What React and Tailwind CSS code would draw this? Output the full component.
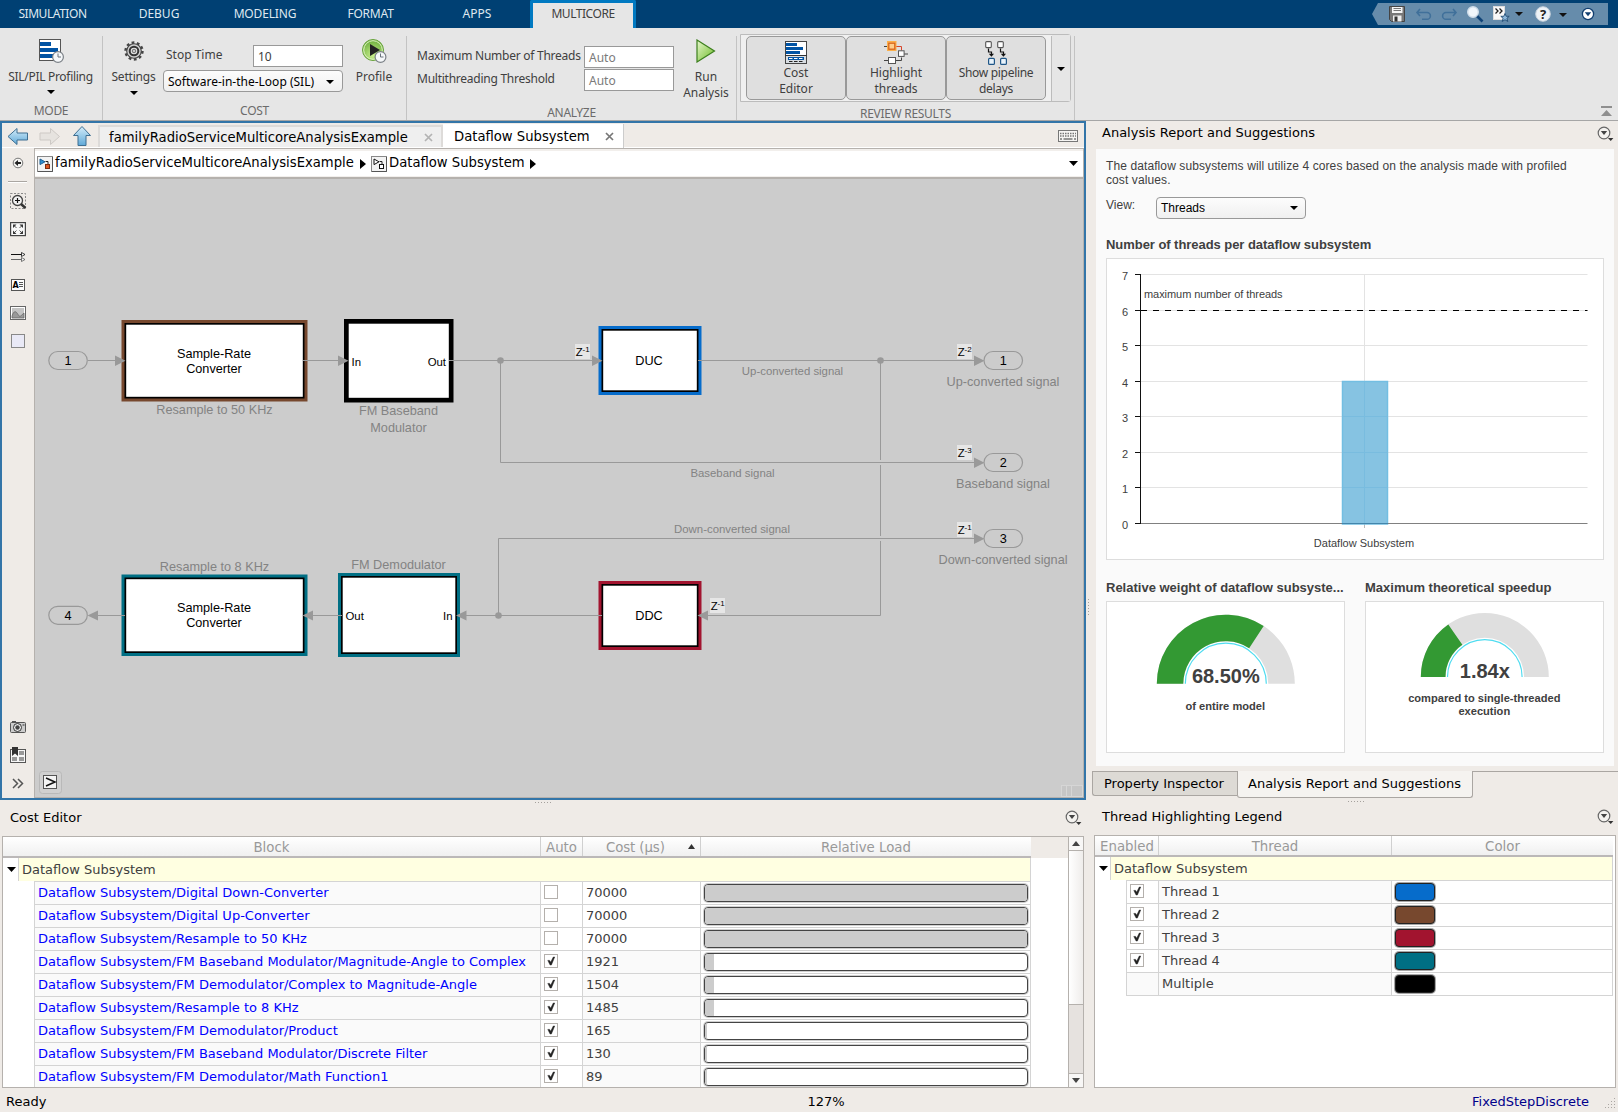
import clsx from "clsx";

const costRows = [
  { block: "Dataflow Subsystem/Digital Down-Converter", auto: false, cost: "70000", load: 324 },
  { block: "Dataflow Subsystem/Digital Up-Converter", auto: false, cost: "70000", load: 324 },
  { block: "Dataflow Subsystem/Resample to 50 KHz", auto: false, cost: "70000", load: 324 },
  { block: "Dataflow Subsystem/FM Baseband Modulator/Magnitude-Angle to Complex", auto: true, cost: "1921", load: 9 },
  { block: "Dataflow Subsystem/FM Demodulator/Complex to Magnitude-Angle", auto: true, cost: "1504", load: 9 },
  { block: "Dataflow Subsystem/Resample to 8 KHz", auto: true, cost: "1485", load: 9 },
  { block: "Dataflow Subsystem/FM Demodulator/Product", auto: true, cost: "165", load: 2 },
  { block: "Dataflow Subsystem/FM Baseband Modulator/Discrete Filter", auto: true, cost: "130", load: 2 },
  { block: "Dataflow Subsystem/FM Demodulator/Math Function1", auto: true, cost: "89", load: 2 },
];

const threads = [
  { name: "Thread 1", swatch: "bg-[#066ccb]", enabled: true },
  { name: "Thread 2", swatch: "bg-[#77482e]", enabled: true },
  { name: "Thread 3", swatch: "bg-[#a2142f]", enabled: true },
  { name: "Thread 4", swatch: "bg-[#006f84]", enabled: true },
  { name: "Multiple", swatch: "bg-black", enabled: false },
];

/* ---------- small shared pieces ---------- */

const Caret = ({ className, up }) => (
  <svg className={clsx("shrink-0", className)} width="9" height="5" viewBox="0 0 9 5" preserveAspectRatio="none">
    <path d={up ? "M0 5L4.5 0L9 5z" : "M0 0h9L4.5 5z"} fill="currentColor" />
  </svg>
);

const Check = ({ on }) => (
  <div className="flex size-[14px] items-center justify-center border border-[#b4b0ac] bg-white">
    {on && (
      <svg width="10" height="10" viewBox="0 0 10 10">
        <path d="M1.8 4.4h1.800L4.700 6.200L7.300 1h1.400L5.400 9H4.100z" fill="#222" stroke="#222" strokeWidth="0.5" />
      </svg>
    )}
  </div>
);

const PanelMenu = () => (
  <svg width="18" height="16" viewBox="0 0 18 16">
    <circle cx="7" cy="7" r="5.8" fill="#f4f2ef" stroke="#666" strokeWidth="1.2" />
    <path d="M3.8 5h6.4L7 9z" fill="#444" />
    <path d="M11 12h5.4l-2.7 3z" fill="#333" />
  </svg>
);

const Dots = ({ vertical }) => (
  <div className={clsx("flex gap-[2px]", vertical && "flex-col")}>
    {[0, 1, 2, 3, 4, 5].map((i) => (
      <span key={i} className="size-px bg-[#a5a19d]" />
    ))}
  </div>
);

const DropList = ({ children, className }) => (
  <div
    className={clsx(
      "flex h-[22px] items-center justify-between rounded-[4px] border border-[#999] bg-linear-to-b from-[#fcfcfc] to-[#f0f0f0] pl-[4px] text-black",
      className
    )}
  >
    {children}
    <Caret className="h-[4px] w-[8px]" />
  </div>
);

/* ---------- toolstrip icons ---------- */

const Clock = ({ x, y }) => (
  <g>
    <circle cx={x} cy={y} r="5.4" fill="#f6f8fa" stroke="#7b8187" strokeWidth="1.2" />
    <path d={`M${x} ${y - 3.5}V${y}h3`} fill="none" stroke="#68727c" />
  </g>
);

const ProfilingIcon = () => (
  <svg width="26" height="24" viewBox="0 0 26 24">
    <rect x="0.5" y="0.5" width="21" height="21" fill="#fff" stroke="#555" />
    <path d="M1 3h11v4H1zM1 9h18v4H1zM1 15h14v4H1z" fill="#0053a4" />
    <Clock x={19} y={18} />
  </svg>
);

const GearIcon = () => (
  <svg width="20" height="20" viewBox="0 0 20 20">
    <circle cx="10" cy="10" r="8.4" fill="none" stroke="#444" strokeWidth="2.6" strokeDasharray="2.7 2.58" />
    <circle cx="10" cy="10" r="7.3" fill="#cfcfcf" stroke="#444" strokeWidth="1.1" />
    <circle cx="10" cy="10" r="4.3" fill="#e8e8e8" stroke="#333" strokeWidth="2" />
    <circle cx="10" cy="10" r="1.8" fill="#c9c9c9" stroke="#555" strokeWidth="0.8" />
  </svg>
);

const ProfileIcon = () => (
  <svg width="26" height="24" viewBox="0 0 26 24">
    <defs>
      <radialGradient id="profileGreen" cx="0.5" cy="0.75" r="0.7">
        <stop offset="0" stopColor="#c9ee8e" />
        <stop offset="1" stopColor="#6fb13f" />
      </radialGradient>
    </defs>
    <circle cx="11" cy="11" r="10.5" fill="url(#profileGreen)" stroke="#69a33e" />
    <circle cx="11" cy="11" r="9.3" fill="none" stroke="#dff3c4" strokeWidth="1" />
    <path d="M8 5v12l10-6z" fill="#222" />
    <Clock x={18.5} y={18} />
  </svg>
);

const RunIcon = () => (
  <svg width="20" height="24" viewBox="0 0 20 24">
    <defs>
      <linearGradient id="runGreen" x1="0" y1="0" x2="1" y2="1">
        <stop offset="0" stopColor="#e8f7cf" />
        <stop offset="1" stopColor="#6cbb24" />
      </linearGradient>
    </defs>
    <path d="M1 1l17.5 11L1 23z" fill="url(#runGreen)" stroke="#3c7f1d" strokeWidth="1.2" />
  </svg>
);

const CostEditorIcon = () => (
  <svg width="22" height="23" viewBox="0 0 22 23">
    <rect x="0.5" y="0.5" width="21" height="22" fill="#fff" stroke="#444" />
    <path d="M1 2h11v3H1zM1 6h17v3H1zM1 10h14v3H1z" fill="#0053a4" />
    <path d="M1 14h20v8H1z" fill="#d8dde2" />
    <path d="M0 14.5h22" stroke="#333" />
    <path d="M3 16h16v3H3z" fill="#0053a4" />
    <path d="M4 17.5h3.5M9 17.5h3.5M14 17.5h3.5" stroke="#fff" />
    <path d="M4 20.5h3.5M9 20.5h3.5M14 20.5h3.5" stroke="#222" />
  </svg>
);

const HighlightIcon = () => (
  <svg width="24" height="24" viewBox="0 0 24 24">
    <path d="M0 5.5h3.5M0 19.5h4M11 19.5h6.5v-3M20 13h4" fill="none" stroke="#444" />
    <path d="M12 5.5h5.5v4" fill="none" stroke="#d6462c" />
    <rect x="3.5" y="0.5" width="8.5" height="9" fill="#ffb95e" stroke="#fbb04c" />
    <rect x="4.8" y="2.2" width="6" height="6" fill="#ffce8c" stroke="#d8651c" strokeWidth="1.3" />
    <rect x="14.5" y="9.8" width="5.6" height="5.6" fill="#fff" stroke="#555" />
    <rect x="4.5" y="16.5" width="7" height="6" fill="#fff" stroke="#555" />
  </svg>
);

const PipelineIcon = () => (
  <svg width="22" height="24" viewBox="0 0 22 24">
    {[0, 12].map((x) => (
      <g key={x}>
        <rect x={x + 0.7} y="0.6" width="5.6" height="6" rx="1" fill="#fff" stroke="#555" strokeWidth="1.1" />
        <path d={`M${x + 3.5} 7.5v3.5h3v3`} fill="none" stroke="#111" strokeWidth="1.2" />
        <path d={`M${x + 3.8} 12.8h5.2l-2.6 3z`} fill="#111" />
        <rect x={x + 3.6} y="17.4" width="5.8" height="6" rx="1" fill="#e8f3fb" stroke="#1f5687" strokeWidth="1.2" />
      </g>
    ))}
  </svg>
);

/* ---------- quick access bar ---------- */

const QuickAccess = () => (
  <svg width="236" height="22" viewBox="1372 3 236 22">
    <path d="M1372 14l6-11h230v22h-230z" fill="#668cab" />
    {/* save */}
    <path d="M1389.5 6.500h15v15h-13l-2-2z" fill="#777" stroke="#444" />
    <path d="M1392 7h10.500v6H1392z" fill="#f4f4f4" />
    <path d="M1393.500 8.500h7.500M1393.500 10.500h7.500" stroke="#777" />
    <path d="M1393 15.500h8.500v6H1393z" fill="#eee" />
    <path d="M1394.500 16.500h3v5h-3z" fill="#333" />
    {/* undo, redo */}
    <path d="M1420 9l-3 3.500l3 3.500M1417.500 12.500h9.500a3.300 3.300 0 0 1 0 6.800h-5" fill="none" stroke="#40709a" strokeWidth="1.600" />
    <path d="M1453 9l3 3.500l-3 3.500M1455.500 12.500h-9.500a3.300 3.300 0 0 0 0 6.800h5" fill="none" stroke="#40709a" strokeWidth="1.600" />
    {/* search */}
    <path d="M1476.500 15.500l6 6" stroke="#0f4377" strokeWidth="2.600" />
    <circle cx="1473" cy="12" r="5.300" fill="#f0f6fb" stroke="#cfdde9" strokeWidth="1.400" />
    {/* favorites */}
    <rect x="1493.500" y="6.500" width="11" height="13" fill="#f8f8f8" stroke="#ddd" />
    <path d="M1495.500 8.500l2.500 2.500l-2.500 2.500M1499.500 8.500l2.500 2.500l-2.500 2.500" fill="none" stroke="#222" strokeWidth="1.300" />
    <path d="M1505 13.500l1.200 2.800h3l-2.300 2l.9 3.200l-2.800-1.800l-2.800 1.800l.9-3.200l-2.300-2h3z" fill="#8db8dc" stroke="#234d74" strokeWidth="0.900" />
    <path d="M1515 12h8l-4 4z" fill="#111" />
    {/* help */}
    <circle cx="1543" cy="14" r="7.300" fill="#eef2f6" stroke="#c7d2dc" />
    <text x="1543" y="19" textAnchor="middle" className="fill-[#222] font-['Noto_Sans'] text-[13px] font-bold">?</text>
    <path d="M1559 13h8l-4 4z" fill="#111" />
    <circle cx="1588" cy="14" r="5.600" fill="#fff" stroke="#123f70" strokeWidth="1.300" />
    <path d="M1584.800 12.300h6.400l-3.200 4z" fill="#123f70" />
  </svg>
);

const ribbonTabs = [
  { label: "SIMULATION", width: "w-[105px] tracking-[-0.45px]" },
  { label: "DEBUG", width: "w-[108px]" },
  { label: "MODELING", width: "w-[104px] tracking-[-0.15px]" },
  { label: "FORMAT", width: "w-[107px] tracking-[-0.2px]" },
  { label: "APPS", width: "w-[106px]" },
];

const TabBar = () => (
  <div className="flex h-[28px] items-center bg-[#004073] text-[12px] text-[#dfe8f0]">
    {ribbonTabs.map((t) => (
      <div key={t.label} className={clsx("pb-px text-center", t.width)}>
        {t.label}
      </div>
    ))}
    <div className="flex h-full w-[106px] items-center justify-center rounded-t-[2px] border-x-[3px] border-t-[3px] border-[#0079c1] bg-[#e6e6e6] pb-[4px] tracking-[-0.45px] text-[#404040]">
      MULTICORE
    </div>
    <div className="mr-[10px] ml-auto">
      <QuickAccess />
    </div>
  </div>
);

const Section = ({ label, className, children }) => (
  <div className={clsx("mt-[8px] flex h-[84px] shrink-0 flex-col border-r border-[#c3c3c3]", className)}>
    <div className="flex h-[66px]">{children}</div>
    <div className="pt-[3px] text-center text-[12px] leading-[18px] tracking-[-0.3px] text-[#6b6b6b]">{label}</div>
  </div>
);

const GalleryButton = ({ icon, children }) => (
  <div className="flex h-[64px] w-[100px] flex-col items-center rounded-[5px] border border-[#999] bg-[#dfdfdf] pt-[4px] text-center leading-[16px]">
    <div className="h-[24px]">{icon}</div>
    <span>{children}</span>
  </div>
);

const Toolstrip = () => (
  <div className="flex h-[93px] border-b border-[#a6a6a6] bg-[#e6e6e6] text-[12px] leading-[16px] text-[#404040]">
    <Section label="MODE" className="w-[103px]">
      <div className="flex w-[101px] flex-col items-center pt-[3px]">
        <div className="pl-[3px]"><ProfilingIcon /></div>
        <span className="mt-[6px] tracking-[-0.3px]">SIL/PIL Profiling</span>
        <Caret className="mt-[5px] h-[4px] w-[8px] text-black" />
      </div>
    </Section>
    <Section label="COST" className="w-[304px]">
      <div className="ml-[5px] flex w-[51px] flex-col items-center pt-[5px]">
        <GearIcon />
        <span className="mt-[8px] tracking-[-0.2px]">Settings</span>
        <Caret className="mt-[6px] h-[4px] w-[8px] text-black" />
      </div>
      <div className="ml-[4px] w-[180px] pt-[9px]">
        <div className="flex h-[22px] items-center justify-between pl-[3px]">
          <span className="pb-[2px]">Stop Time</span>
          <div className="flex h-[22px] w-[90px] items-center border border-[#999] bg-white pt-px pl-[4px]">10</div>
        </div>
        <DropList className="mt-[3px] pt-px pr-[8px]">Software-in-the-Loop (SIL)</DropList>
      </div>
      <div className="ml-[5px] flex w-[52px] flex-col items-center pt-[3px]">
        <div className="pl-[2px]"><ProfileIcon /></div>
        <span className="mt-[6px]">Profile</span>
      </div>
    </Section>
    <Section label="ANALYZE" className="w-[330px]">
      <div className="ml-[10px] w-[257px] pt-[10px]">
        {["Maximum Number of Threads", "Multithreading Threshold"].map((l) => (
          <div key={l} className="mb-px flex items-center justify-between">
            <span className="pb-[3px] tracking-[-0.25px] whitespace-nowrap">{l}</span>
            <div className="flex h-[22px] w-[90px] shrink-0 items-center border border-[#999] bg-white pt-px pl-[4px] text-[#7b7b7b]">Auto</div>
          </div>
        ))}
      </div>
      <div className="ml-[6px] flex w-[52px] flex-col items-center pt-[3px] text-center">
        <RunIcon />
        <span className="mt-[6px] w-[52px] whitespace-nowrap">Run<br />Analysis</span>
      </div>
    </Section>
    <Section label="REVIEW RESULTS" className="w-[338px]">
      <div className="-mt-[2px] ml-[3px] flex h-[68px] w-[331px] shrink-0 rounded-r-[3px] border border-[#bcbcbc] bg-[#f0f0f0] pt-px">
        <div className="flex w-[311px] border-r border-[#bcbcbc] pl-[5px]">
          <GalleryButton icon={<CostEditorIcon />}>Cost<br />Editor</GalleryButton>
          <GalleryButton icon={<HighlightIcon />}>Highlight<br />threads</GalleryButton>
          <GalleryButton icon={<PipelineIcon />}><span className="tracking-[-0.3px]">Show pipeline<br />delays</span></GalleryButton>
        </div>
        <div className="-mt-px flex flex-1 items-center justify-center bg-[#e6e6e6] pt-[2px] text-black">
          <Caret className="h-[4px] w-[8px]" />
        </div>
      </div>
    </Section>
    <div className="mt-[78px] mr-[6px] ml-auto">
      <svg width="11" height="10" viewBox="0 0 11 10">
        <path d="M0 0h11v2H0zM5.500 4L11 10H0z" fill="#8f8f8f" />
      </svg>
    </div>
  </div>
);

/* ---------- model editor ---------- */

const NavArrows = () => (
  <svg width="86" height="22" viewBox="7 125 86 22">
    <defs>
      <linearGradient id="arrowBlue" x1="0" y1="0" x2="0" y2="1">
        <stop offset="0" stopColor="#d5edfa" />
        <stop offset="1" stopColor="#5fa9d8" />
      </linearGradient>
    </defs>
    <path d="M8 136.500l9-8v4.500h10.500v7H17v4.500z" fill="url(#arrowBlue)" stroke="#3f6f92" />
    <path d="M59.500 136.500l-9-8v4.500H40v7h10.500v4.500z" fill="#e6e3df" stroke="#cdc9c5" />
    <path d="M82 126.500l8.500 9h-4.500v10h-8v-10h-4.500z" fill="url(#arrowBlue)" stroke="#3f6f92" />
  </svg>
);

const CloseX = ({ className }) => (
  <svg className={className} width="9" height="9" viewBox="0 0 9 9">
    <path d="M1 1l7 7M8 1l-7 7" stroke="currentColor" strokeWidth="1.700" />
  </svg>
);

const KeyboardIcon = () => (
  <svg width="20" height="12" viewBox="0 0 20 12">
    <rect x="0.500" y="0.500" width="19" height="11" fill="#f6f5f3" stroke="#777" />
    <path d="M2 3.500h16M2 6h16" stroke="#777" strokeWidth="1.600" strokeDasharray="1.500 1" />
    <path d="M2 9h2M5.500 9h9M16 9h2" stroke="#777" strokeWidth="1.600" />
  </svg>
);

const ModelIcon = ({ color }) => (
  <svg className="shrink-0" width="16" height="16" viewBox="0 0 16 16">
    <rect x="0.500" y="0.500" width="15" height="15" fill="#f3f3f3" stroke="#888" />
    <path d="M15.500 1v14.500H1" fill="none" stroke="#555" />
    <path d="M3 3l5 2.800l-5 2.800z" fill={color ? "#2f8fd0" : "#fff"} stroke={color ? "#1d5f93" : "#111"} />
    <path d="M8.500 5.500h2.500v3" fill="none" stroke="#222" />
    <rect x="8.500" y="8.500" width="4" height="4" fill={color ? "#e0561f" : "#fff"} stroke={color ? "#7b2c10" : "#111"} />
  </svg>
);

const PlayMark = ({ className }) => (
  <svg className={clsx("shrink-0", className)} width="6" height="10" viewBox="0 0 6 10">
    <path d="M0 0l6 5L0 10z" fill="#000" />
  </svg>
);

const Palette = () => (
  <svg width="32" height="650" viewBox="2 148 32 650">
    <circle cx="18" cy="163" r="4.800" fill="#f5f4f2" stroke="#777" />
    <path d="M18 160v6l-3.500-3zM18 162h3v2h-3z" fill="#222" />
    <path d="M8 181.500h19" stroke="#aaa6a2" />
    <path d="M8 182.500h19" stroke="#fff" />
    {/* zoom */}
    <rect x="10.500" y="193.500" width="15" height="15" fill="none" stroke="#888" strokeDasharray="2 1.500" />
    <circle cx="17.500" cy="200.500" r="5" fill="#f2f2f2" stroke="#444" strokeWidth="1.300" />
    <path d="M21 204l4.500 4" stroke="#333" strokeWidth="2.400" />
    <path d="M17.500 198v5M15 200.500h5" stroke="#111" strokeWidth="1.200" />
    {/* fit to view */}
    <rect x="10.600" y="222.600" width="14.800" height="13" fill="#f8f8f8" stroke="#444" strokeWidth="1.200" />
    <path d="M13 228v-3.500h3.500zM19.500 224.500H23V228zM13 230.500v3.500h3.500zM23 230.500v3.500h-3.500z" fill="#333" />
    <path d="M13.500 225l3 3M22.500 225l-3 3M13.500 233.500l3-3M22.500 233.500l-3-3" stroke="#444" strokeWidth="0.900" />
    {/* sample time arrows */}
    <path d="M11 254.500h11" stroke="#111" />
    <path d="M21.500 252.500l3.500 2l-3.500 2z" fill="#fff" stroke="#111" strokeWidth="0.800" />
    <path d="M11 259.500h11" stroke="#666" />
    <path d="M21.500 257.500l3.500 2l-3.500 2z" fill="#fff" stroke="#555" strokeWidth="0.800" />
    {/* annotation */}
    <rect x="11.500" y="279.500" width="13" height="11" fill="#fdfdfd" stroke="#555" />
    <text x="12.500" y="288" className="fill-black font-['DejaVu_Sans'] text-[8px] font-bold">A</text>
    <path d="M19 282.500h4M19 284.500h4M19 286.500h4" stroke="#444" strokeWidth="0.900" />
    {/* image */}
    <rect x="10.500" y="306.500" width="15" height="13" fill="#fff" stroke="#666" />
    <path d="M12 308h12v10H12z" fill="#c4c4c4" />
    <path d="M12 316c2-6 4-5 6-1.500s3 1 6-1.500v5H12z" fill="#999" stroke="#666" strokeWidth="0.800" />
    {/* area */}
    <rect x="11.500" y="334.500" width="13" height="13" fill="#e9e9f6" stroke="#888" />
    {/* camera */}
    <path d="M12 721h4v2h-4z" fill="#555" />
    <rect x="10.500" y="722.500" width="15" height="10" rx="1" fill="#ccc" stroke="#555" />
    <circle cx="17.500" cy="727.500" r="4" fill="#eee" stroke="#333" />
    <circle cx="17.500" cy="727.500" r="2.200" fill="#444" />
    <path d="M22.500 725h2" stroke="#333" />
    {/* bookmark */}
    <rect x="10.500" y="749.500" width="15" height="13" fill="#f7f7f7" stroke="#555" />
    <path d="M19 751h5v4h-5zM12 757h5v4h-5zM19 757h5v4h-5z" fill="#999" />
    <path d="M12 747h6v9l-3-2.500l-3 2.500z" fill="#333" />
    {/* expand */}
    <path d="M13 779l4.500 4.500l-4.500 4.500M18 779l4.500 4.500l-4.500 4.500" fill="none" stroke="#555" strokeWidth="1.500" />
  </svg>
);

const blocks = [
  { x: 121.5, y: 320, w: 186, h: 81.5, color: "#77482e" },
  { x: 344, y: 319, w: 109.5, h: 83.5, color: "#000000" },
  { x: 598.5, y: 326, w: 103, h: 69, color: "#066ccb" },
  { x: 121.5, y: 574.5, w: 186, h: 81.5, color: "#006f84" },
  { x: 338, y: 573, w: 122, h: 84, color: "#006f84" },
  { x: 598.5, y: 581, w: 103, h: 69, color: "#a2142f" },
];

const ports = [
  { x: 48.8, y: 360.5, n: "1" },
  { x: 48.8, y: 615.3, n: "4" },
  { x: 984, y: 360.5, n: "1" },
  { x: 984, y: 462.5, n: "2" },
  { x: 984, y: 538.5, n: "3" },
];

const delays = [
  { x: 575, y: 344, n: "-1" },
  { x: 957, y: 344, n: "-2" },
  { x: 957, y: 445, n: "-3" },
  { x: 957, y: 522, n: "-1" },
  { x: 710, y: 598, n: "-1" },
];

const names = [
  { x: 214.5, y: 414, t: "Resample to 50 KHz" },
  { x: 398.5, y: 415, t: "FM Baseband" },
  { x: 398.5, y: 432, t: "Modulator" },
  { x: 214.5, y: 571, t: "Resample to 8 KHz" },
  { x: 398.5, y: 569, t: "FM Demodulator" },
  { x: 1003, y: 386, t: "Up-converted signal" },
  { x: 1003, y: 488, t: "Baseband signal" },
  { x: 1003, y: 564, t: "Down-converted signal" },
];

const signals = [
  { x: 792.500, y: 375, t: "Up-converted signal" },
  { x: 732.500, y: 477, t: "Baseband signal" },
  { x: 732, y: 533, t: "Down-converted signal" },
];

const right = [[115, 360.5], [338, 360.5], [592, 360.5], [974, 360.5], [974, 462.5], [974, 538.5]];
const left = [[98, 615.5], [313, 615.5], [466.5, 615.5], [708, 615.5]];

const Diagram = () => (
  <svg width="1048" height="618" viewBox="35 179 1048 618" className="font-['Liberation_Sans']">
    {blocks.map((b, i) => (
      <g key={i}>
        <rect x={b.x} y={b.y} width={b.w} height={b.h} fill={b.color} />
        <rect x={b.x + 3} y={b.y + 3} width={b.w - 6} height={b.h - 6} fill="#000" />
        <rect x={b.x + 4.7} y={b.y + 4.7} width={b.w - 9.4} height={b.h - 9.4} fill="#fff" />
      </g>
    ))}
    <g fill="none" stroke="#999" strokeWidth="1">
      <path d="M88 360.500h30M303 360.500h36M449 360.500h145M500.500 360.500v102H975M698 360.500H975" />
      <path d="M880.500 360.500V460M880.500 465v71M880.500 541v74.500H706M602 615.500H464M498.500 615.500v-77H975M342 615.500h-30M125 615.500H96" />
    </g>
    <g fill="#999">
      <circle cx="500.500" cy="360.500" r="3.300" />
      <circle cx="880.500" cy="360.500" r="3.300" />
      <circle cx="498.500" cy="615.500" r="3.300" />
      {right.map(([x, y]) => (
        <path key={x + "-" + y} d={`M${x} ${y - 5}l10.500 5.200l-10.500 5.200z`} />
      ))}
      {left.map(([x, y]) => (
        <path key={x} d={`M${x} ${y - 5}l-10.500 5l10.500 5z`} />
      ))}
    </g>
    {ports.map((p) => (
      <g key={p.x + "-" + p.y}>
        <rect x={p.x} y={p.y - 9} width="38.500" height="18" rx="9" fill="none" stroke="#999" strokeWidth="1.200" />
        <text x={p.x + 19.3} y={p.y + 4.500} textAnchor="middle" className="text-[12.7px]">{p.n}</text>
      </g>
    ))}
    {delays.map((d) => (
      <g key={d.x + "-" + d.y}>
        <rect x={d.x} y={d.y} width="15" height="15" fill="#e6e6e6" />
        <text x={d.x + 0.7} y={d.y + 11.500} className="text-[11.4px]">Z</text>
        <text x={d.x + 7.5} y={d.y + 8} className="text-[8px]">{d.n}</text>
      </g>
    ))}
    <g textAnchor="middle" className="text-[12.7px]">
      <text x="214" y="358">Sample-Rate</text>
      <text x="214" y="373">Converter</text>
      <text x="214" y="612">Sample-Rate</text>
      <text x="214" y="627">Converter</text>
      <text x="649" y="365">DUC</text>
      <text x="649" y="620">DDC</text>
    </g>
    <g className="text-[11.4px]">
      <text x="351.500" y="366">In</text>
      <text x="446" y="366" textAnchor="end">Out</text>
      <text x="345.500" y="620">Out</text>
      <text x="452.500" y="620" textAnchor="end">In</text>
    </g>
    <g textAnchor="middle" className="fill-[#838383] text-[12.7px]">
      {names.map((n) => (
        <text key={n.t} x={n.x} y={n.y}>{n.t}</text>
      ))}
    </g>
    <g textAnchor="middle" className="fill-[#838383] text-[11.4px]">
      {signals.map((n) => (
        <text key={n.t} x={n.x} y={n.y}>{n.t}</text>
      ))}
    </g>
    {/* explorer bar toggle */}
    <rect x="39.500" y="771.500" width="22" height="22" rx="3" fill="#d0d0d0" stroke="#b9b9b9" />
    <rect x="43.500" y="775.500" width="13" height="13" fill="#f4f4f4" stroke="#555" />
    <path d="M46 778l9 4l-9 4" fill="none" stroke="#111" strokeWidth="1.500" />
    <g fill="#c6c6c6" stroke="#d6d6d6">
      <rect x="1061.500" y="785.500" width="5" height="11" />
      <rect x="1066.500" y="785.500" width="5" height="11" />
      <rect x="1071.500" y="785.500" width="11" height="11" />
    </g>
  </svg>
);

const Editor = () => (
  <div className="h-[679px] border-2 border-[#3375a8] text-[13.2px]">
    <div className="flex h-[25px] border-b border-[#fff] pl-[5px]">
      <div className="pt-[2px]"><NavArrows /></div>
      <div className="mt-[2px] ml-[5px] flex h-[22px] w-[345px] items-center border-2 border-b-0 border-[#dddbd9] bg-[#efefef] pl-[9px] text-black">
        <span className="pt-px">familyRadioServiceMulticoreAnalysisExample</span>
        <CloseX className="mr-[8px] ml-auto text-[#b3b3b3]" />
      </div>
      <div className="mt-px flex h-[24px] w-[181px] items-center border-r border-[#ccc] bg-white pl-[11px]">
        <span className="pt-px">Dataflow Subsystem</span>
        <CloseX className="mr-[9px] ml-auto text-[#777]" />
      </div>
      <div className="mt-[7px] mr-[6px] ml-auto"><KeyboardIcon /></div>
    </div>
    <div className="flex h-[650px]">
      <Palette />
      <div className="w-[1050px] border-r border-b border-l border-[#b5b1ad]">
        <div className="flex h-[31px] items-center border-t border-b-2 border-[#b5b1ad] bg-[#f2efec] pt-px">
          <div className="flex h-[25px] w-full items-center bg-white pl-[2px]">
            <ModelIcon color />
            <span className="w-[307px] pb-[2px] pl-[2px]">familyRadioServiceMulticoreAnalysisExample</span>
            <PlayMark />
            <div className="ml-[5px]"><ModelIcon /></div>
            <span className="w-[141px] pb-[2px] pl-[2px]">Dataflow Subsystem</span>
            <PlayMark className="ml-[2px]" />
            <Caret className="mr-[5px] ml-auto text-black" />
          </div>
        </div>
        <div className="bg-[#ccc]"><Diagram /></div>
      </div>
    </div>
  </div>
);

/* ---------- cost editor ---------- */

const CostEditor = () => (
  <div className="flex h-[289px] flex-col">
    <div className="flex h-[4px] justify-center pt-[2px]"><Dots /></div>
    <div className="flex h-[32px] items-center justify-between pr-[3px] pb-[3px] pl-[10px]">
      <span className="pb-[2px]">Cost Editor</span>
      <div className="-mt-px"><PanelMenu /></div>
    </div>
    <div className="ml-[2px] flex h-[252px] w-[1082px] overflow-hidden border border-[#b5b1ad] bg-white">
      <div className="flex-1">
        <div className="flex h-[21px] text-center text-[13.333px] leading-[21px] text-[#999]">
          <div className="flex w-[1028px] border-b-2 border-[#bbb8b8] bg-linear-to-b from-white to-[#f0f0f0]">
            <div className="w-[538px] border-r border-[#d0d0d0]">Block</div>
            <div className="w-[42px] border-r border-[#d0d0d0]">Auto</div>
            <div className="flex w-[118px] items-center border-r border-[#d0d0d0] pl-[23px]">
              <span className="pt-px tracking-[-0.1px]">Cost (µs)</span>
              <Caret up className="mr-[5px] ml-auto h-[5px] w-[7px] text-[#333]" />
            </div>
            <div className="flex-1">Relative Load</div>
          </div>
          <div className="flex-1 bg-[#efebe7]" />
        </div>
        <div className="flex h-[23px] w-[1028px]">
          <div className="flex w-[15px] justify-center pt-[9px] pl-px"><Caret className="text-black" /></div>
          <div className="flex-1 border-x border-[#d4d4d4] bg-[#ffffe1] pl-[3px] leading-[23px] text-[#404040]">Dataflow Subsystem</div>
        </div>
        {costRows.map((r) => (
          <div key={r.block} className="ml-[31px] flex h-[23px] w-[997px] border-x border-t border-[#d4d4d4] leading-[22px]">
            <div className="w-[506px] border-r border-[#d4d4d4] bg-[#fafafa] pl-[3px] whitespace-nowrap text-[#0000ff]">{r.block}</div>
            <div className="w-[42px] border-r border-[#d4d4d4] pt-[3px] pl-[3px]"><Check on={r.auto} /></div>
            <div className={clsx("w-[118px] border-r border-[#d4d4d4] pl-[3px] text-[#404040]", r.auto && "bg-[#fafafa]")}>{r.cost}</div>
            <div className="flex-1 pt-[2px] pl-[3px]">
              <div className="h-[18px] w-[324px] overflow-hidden rounded-[4px] border border-[#444] bg-white ring-1 ring-[#444]/25">
                <div className="h-full bg-[#ccc]" style={{ width: r.load }} />
              </div>
            </div>
          </div>
        ))}
      </div>
      <div className="flex w-[15px] flex-col items-center border-l border-[#b5b1ad] bg-[#e6e2df]">
        <div className="flex h-[14px] w-full items-center justify-center border-b border-[#b5b1ad] bg-[#f8f7f6]">
          <Caret up className="h-[5px] w-[8px] text-[#444]" />
        </div>
        <div className="h-[154px] w-full border-b border-[#b5b1ad] bg-linear-to-r from-white to-[#efedeb]" />
        <div className="mt-auto flex h-[14px] w-full items-center justify-center border-t border-[#b5b1ad] bg-[#f8f7f6]">
          <Caret className="h-[5px] w-[8px] text-[#444]" />
        </div>
      </div>
    </div>
  </div>
);

/* ---------- analysis report ---------- */

const gridY = [523.5, 487.5, 452.5, 416.5, 381.5, 345.5, 310.5, 274.5];

const ThreadsChart = () => (
  <svg width="496" height="300" viewBox="1107 259 496 300" className="font-['Liberation_Sans'] text-[11px]">
    {gridY.slice(1).map((y) => (
      <path key={y} d={`M1140 ${y}H1587.500`} stroke="#e3e3e3" />
    ))}
    <path d="M1364.500 274V523" stroke="#e3e3e3" />
    <path d="M1364.500 524v4" stroke="#bbb" />
    <rect x="1342.500" y="381.500" width="45" height="142.500" fill="#86c3e2" stroke="#73bee2" strokeWidth="1.500" />
    <path d="M1364.500 382V523M1342 416.500h46M1342 452.500h46M1342 487.500h46" stroke="#79bcdf" />
    <path d="M1140 523.500H1587.500" stroke="#808080" />
    <path d="M1342 523.500h46" stroke="#4385ab" />
    <path d="M1141 310.500H1587.500" stroke="#000" strokeWidth="1.200" strokeDasharray="6 6" />
    <path d="M1140.500 274V524" stroke="#111" />
    {gridY.map((y, i) => (
      <g key={y}>
        <path d={`M1135 ${y}h5`} stroke="#111" />
        <text x="1125" y={y + 5.500} textAnchor="middle" fill="#404040">{i}</text>
      </g>
    ))}
    <text x="1144" y="298" fill="#404040" className="tracking-[-0.06px]">maximum number of threads</text>
    <text x="1364" y="547" textAnchor="middle" fill="#404040">Dataflow Subsystem</text>
  </svg>
);

const Gauge = ({ title, value, caption, cx, cy, r, inner, ratio, valueY, captionY }) => {
  const a = Math.PI * (1 - ratio);
  const px = (rad) => cx + rad * Math.cos(a);
  const py = (rad) => cy - rad * Math.sin(a);
  return (
    <div className="w-[239px]">
      <div className="h-[21px] text-[13px] leading-[15px] font-bold whitespace-nowrap">{title}</div>
      <div className="h-[152px] border border-[#ddd] bg-white">
        <svg width="237" height="150" viewBox="0 0 237 150">
          <path d={`M${cx - r} ${cy}A${r} ${r} 0 0 1 ${cx + r} ${cy}H${cx + inner}A${inner} ${inner} 0 0 0 ${cx - inner} ${cy}z`} fill="#dfdfdf" />
          <path d={`M${cx - r} ${cy}A${r} ${r} 0 0 1 ${px(r)} ${py(r)}L${px(inner)} ${py(inner)}A${inner} ${inner} 0 0 0 ${cx - inner} ${cy}z`} fill="#339933" />
          <path d={`M${cx - inner + 2} ${cy}A${inner - 2} ${inner - 2} 0 0 1 ${cx + inner - 2} ${cy}`} fill="none" stroke="#4fdcf0" strokeWidth="1.200" />
          <g textAnchor="middle" fill="#404040" className="font-bold">
            <text x={cx} y={valueY} className="text-[20px]">{value}</text>
            {caption.map((c, i) => (
              <text key={c} x={cx - 0.5} y={captionY + i * 13} className="text-[11.1px]">{c}</text>
            ))}
          </g>
        </svg>
      </div>
    </div>
  );
};

const Report = () => (
  <div className="h-[645px]">
    <div className="flex h-[28px] items-center justify-between pr-[3px] pl-[16px]">
      <span className="pb-[4px]">Analysis Report and Suggestions</span>
      <div className="pb-[3px]"><PanelMenu /></div>
    </div>
    <div className="ml-[10px] h-[617px] w-[518px] bg-[#fafafa] pt-[10px] pl-[10px] font-['Liberation_Sans'] text-[12px] text-[#404040]">
      <div className="w-[480px] leading-[14px] tracking-[0.1px]">
        The dataflow subsystems will utilize 4 cores based on the analysis made with profiled cost values.
      </div>
      <div className="mt-[10px] flex">
        <span className="-mt-px w-[50px]">View:</span>
        <DropList className="w-[150px] pr-[7px]">Threads</DropList>
      </div>
      <div className="mt-[18px] text-[13px] leading-[15px] font-bold tracking-[-0.05px]">Number of threads per dataflow subsystem</div>
      <div className="mt-[6px] h-[302px] w-[498px] border border-[#ddd] bg-white"><ThreadsChart /></div>
      <div className="mt-[20px] flex gap-[20px]">
        <Gauge title="Relative weight of dataflow subsyste..." value="68.50%" caption={["of entire model"]} cx={118.8} cy={81.7} r={69} inner={42.5} ratio={0.685} valueY={81} captionY={107.7} />
        <Gauge title="Maximum theoretical speedup" value="1.84x" caption={["compared to single-threaded", "execution"]} cx={118.8} cy={75} r={64} inner={39.3} ratio={0.3067} valueY={76} captionY={100} />
      </div>
    </div>
  </div>
);

const SideTabs = () => (
  <div className="mt-[5px] flex h-[28px] pl-[6px]">
    <div className="h-[25px] w-[145px] rounded-bl-[3px] border border-r-0 border-[#aaa6a2] bg-[#dddad5] pl-[11px] leading-[24px]">Property Inspector</div>
    <div className="h-[27px] w-[236px] rounded-b-[3px] border border-t-0 border-[#aaa6a2] bg-[#f5f3f0] pl-[10px] leading-[26px]">
      Analysis Report and Suggestions
    </div>
    <div className="flex-1 border-t border-[#aaa6a2]" />
  </div>
);

const Legend = () => (
  <div>
    <div className="flex h-[4px] pt-[2px] pl-[262px]"><Dots /></div>
    <div className="flex h-[32px] items-center justify-between pr-[3px] pb-[3px] pl-[16px]">
      <span className="pb-[2px]">Thread Highlighting Legend</span>
      <div className="-mt-[2px]"><PanelMenu /></div>
    </div>
    <div className="ml-[8px] h-[253px] w-[522px] border border-[#b5b1ad] bg-white pr-[2px]">
      <div className="flex h-[21px] border-b-2 border-[#bbb8b8] bg-linear-to-b from-white to-[#f0f0f0] text-center text-[13.333px] leading-[21px] text-[#999]">
        <div className="w-[64px] border-r border-[#d0d0d0] pl-px">Enabled</div>
        <div className="w-[233px] border-r border-[#d0d0d0]">Thread</div>
        <div className="flex-1">Color</div>
      </div>
      <div className="flex h-[23px]">
        <div className="flex w-[15px] justify-center pt-[9px] pl-[2px]"><Caret className="text-black" /></div>
        <div className="flex-1 border-x border-[#d4d4d4] bg-[#ffffe1] pl-[3px] leading-[23px] text-[#404040]">Dataflow Subsystem</div>
      </div>
      {threads.map((t) => (
        <div key={t.name} className="ml-[31px] flex h-[23px] border-x border-t border-[#d4d4d4] leading-[22px] text-[#404040]">
          <div className={clsx("w-[32px] border-r border-[#d4d4d4] pt-[3px] pl-[3px]", !t.enabled && "bg-[#fafafa]")}>
            {t.enabled && <Check on />}
          </div>
          <div className="w-[233px] border-r border-[#d4d4d4] bg-[#fafafa] pl-[3px]">{t.name}</div>
          <div className="flex-1 pt-[2px] pl-[3px]">
            <div className={clsx("h-[18px] w-[40px] rounded-[4px] border border-[#222] ring-1 ring-[#222]/40", t.swatch)} />
          </div>
        </div>
      ))}
      <div className="ml-[31px] border-t border-[#d4d4d4]" />
    </div>
  </div>
);

const StatusBar = () => (
  <div className="flex h-[23px] items-center justify-between pt-[2px] pl-[6px]">
    <span className="w-[200px]">Ready</span>
    <span className="mr-[14px]">127%</span>
    <div className="flex w-[158px] items-center justify-end text-[#00008b]">
      <span className="pr-[15px]">FixedStepDiscrete</span>
      <svg width="14" height="14" viewBox="0 0 14 14" className="self-end">
        <path d="M10 1.500h1M10 4.500h1M7 4.500h1M10 7.500h1M7 7.500h1M4 7.500h1M10 10.500h1M7 10.500h1M4 10.500h1M1 10.500h1" stroke="#aaa6a2" />
      </svg>
    </div>
  </div>
);

export default function App() {
  return (
    <div className="h-[1112px] w-[1618px] overflow-hidden bg-[#efebe7] font-['Noto_Sans',sans-serif]">
      <TabBar />
      <Toolstrip />
      <div className="flex h-[968px] font-['DejaVu_Sans',sans-serif] text-[13px] text-black">
        <div className="w-[1086px]">
          <Editor />
          <CostEditor />
        </div>
        {/* splitter handle between the editor and the side panels */}
        <div className="-mr-[5px] flex w-[5px] items-start pt-[478px] pl-[2px]"><Dots vertical /></div>
        <div className="w-[532px]">
          <Report />
          <SideTabs />
          <Legend />
        </div>
      </div>
      <div className="font-['DejaVu_Sans',sans-serif] text-[13px] text-black">
        <StatusBar />
      </div>
    </div>
  );
}
